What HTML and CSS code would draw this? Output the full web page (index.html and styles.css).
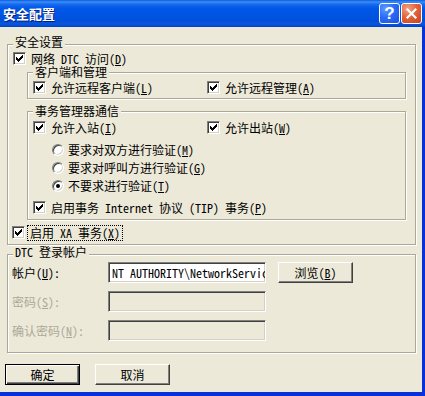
FILE: index.html
```html
<!DOCTYPE html>
<html lang="zh-CN">
<head>
<meta charset="utf-8">
<title>安全配置</title>
<link rel="stylesheet" href="styles.css">
</head>
<body>
<div class="window">
  <div class="titlebar">
    <span class="title">安全配置</span>
    <div class="caption-buttons">
      <span class="cap-btn help">?</span>
      <span class="cap-btn close"><svg width="21" height="21" viewBox="0 0 21 21"><path d="M6.5 6.5 L14.5 14.5 M14.5 6.5 L6.5 14.5" stroke="#fff" stroke-width="2.2" stroke-linecap="square"/></svg></span>
    </div>
  </div>
  <div class="client">
    <div class="group g-sec">
      <span class="group-title">安全设置</span>
      <label class="check"><span class="cb on"></span><span>网络 DTC 访问(<u>D</u>)</span></label>
      <div class="group sub g-client">
        <span class="group-title">客户端和管理</span>
        <div class="two-col">
          <label class="check"><span class="cb on"></span><span>允许远程客户端(<u>L</u>)</span></label>
          <label class="check"><span class="cb on"></span><span>允许远程管理(<u>A</u>)</span></label>
        </div>
      </div>
      <div class="group sub g-tm">
        <span class="group-title">事务管理器通信</span>
        <div class="two-col">
          <label class="check"><span class="cb on"></span><span>允许入站(<u>I</u>)</span></label>
          <label class="check"><span class="cb on"></span><span>允许出站(<u>W</u>)</span></label>
        </div>
        <div class="radios">
          <label class="radio"><span class="rb"></span><span>要求对双方进行验证(<u>M</u>)</span></label>
          <label class="radio"><span class="rb"></span><span>要求对呼叫方进行验证(<u>G</u>)</span></label>
          <label class="radio"><span class="rb on"></span><span>不要求进行验证(<u>T</u>)</span></label>
        </div>
        <label class="check tip"><span class="cb on"></span><span>启用事务 Internet 协议 (TIP) 事务(<u>P</u>)</span></label>
      </div>
      <label class="check xa"><span class="cb on"></span><span class="focus">启用 XA 事务(<u>X</u>)</span></label>
    </div>

    <div class="group g-dtc">
      <span class="group-title">DTC 登录帐户</span>
      <div class="form">
        <span class="flabel">帐户(<u>U</u>):</span>
        <div class="field"><span>NT AUTHORITY\NetworkService</span></div>
        <span class="btn browse">浏览(<u>B</u>)</span>
        <span class="flabel disabled">密码(<u>S</u>):</span>
        <div class="field disabled"></div>
        <span></span>
        <span class="flabel disabled">确认密码(<u>N</u>):</span>
        <div class="field disabled"></div>
        <span></span>
      </div>
    </div>

    <div class="actions">
      <span class="btn default">确定</span>
      <span class="btn">取消</span>
    </div>
  </div>
</div>
</body>
</html>
```
FILE: styles.css
```css
html, body {
  margin: 0;
  padding: 0;
}
body {
  width: 425px;
  height: 396px;
  overflow: hidden;
  background: #ece9d8;
  font-family: "Noto Sans Mono CJK SC", "Noto Sans CJK SC", sans-serif;
  font-size: 12px;
  line-height: 13px;
  color: #000;
}
u { text-decoration: underline; text-underline-offset: 1px; }

.window {
  width: 425px;
  height: 396px;
  display: flex;
  flex-direction: column;
}

/* title bar */
.titlebar {
  height: 27px;
  flex: none;
  display: flex;
  align-items: center;
  justify-content: space-between;
  background: linear-gradient(to bottom, #0a5ddc 0, #3d8ef6 2px, #1a6cf0 4px, #0058e6 8px, #0054e3 16px, #004ed9 21px, #0a55dd 24px, #0043c8 27px);
}
.title {
  margin-left: 3px;
  color: #fff;
  font-family: "Noto Sans CJK SC", sans-serif;
  font-weight: bold;
  font-size: 13px;
  line-height: 15px;
  text-shadow: 1px 1px 0 #0a1d7a;
}
.caption-buttons {
  display: flex;
  gap: 1px;
  margin-right: 3px;
}
.cap-btn {
  width: 21px;
  height: 21px;
  box-sizing: border-box;
  border: 1px solid #fff;
  border-radius: 3px;
  display: flex;
  align-items: center;
  justify-content: center;
}
.cap-btn.help {
  background: radial-gradient(circle at 30% 25%, #5f9cff 0, #2a6cf5 45%, #1a52e0 100%);
  color: #fff;
  font-family: "Liberation Sans", sans-serif;
  font-weight: bold;
  font-size: 17px;
  line-height: 19px;
}
.cap-btn.close {
  background: radial-gradient(circle at 30% 25%, #f2a283 0, #e2643a 45%, #c9401c 100%);
}
.cap-btn.close svg { display: block; margin: -1px; }

/* client area */
.client {
  flex: 1;
  width: 425px;
  border-right: 3px solid #0831d9;
  border-bottom: 4px solid #0831d9;
  padding: 17px 6px 0 7px;
  box-sizing: border-box;
  background: #ece9d8;
}

/* group boxes */
.group {
  position: relative;
  border: 1px solid #aca899;
  box-shadow: inset 1px 1px 0 #fff, 1px 1px 0 #fff;
}
.group-title {
  position: absolute;
  top: -9px;
  left: 5px;
  padding: 0 2px;
  background: #ece9d8;
  line-height: 12px;
  white-space: nowrap;
}
.sub > .group-title {
  top: -7px;
}
.g-sec {
  padding: 7px 0 5px 5px;
}
.sub {
  margin: 0 9px 0 14px;
  padding-left: 5px;
}
.g-client {
  margin-top: 7px;
  padding-top: 8px;
  padding-bottom: 4px;
}
.g-tm {
  margin-top: 12px;
  padding-top: 9px;
  padding-bottom: 5px;
}
.g-dtc {
  margin-top: 9px;
  padding: 7px 0 11px 4px;
}

/* checkboxes */
.check, .radio {
  display: flex;
  align-items: center;
  gap: 5px;
  height: 13px;
  line-height: 12px;
  white-space: nowrap;
}
.cb {
  flex: none;
  width: 13px;
  height: 13px;
  box-sizing: border-box;
  background: #fff;
  border: 1px solid;
  border-color: #808080 #fff #fff #808080;
  box-shadow: inset 1px 1px 0 #404040, inset -1px -1px 0 #d4d0c8;
  position: relative;
}
.cb.on::after {
  content: "";
  position: absolute;
  left: 2px;
  top: 2px;
  width: 7px;
  height: 7px;
  background:
    linear-gradient(#000, #000) 0 2px / 1px 3px no-repeat,
    linear-gradient(#000, #000) 1px 3px / 1px 3px no-repeat,
    linear-gradient(#000, #000) 2px 4px / 1px 3px no-repeat,
    linear-gradient(#000, #000) 3px 3px / 1px 3px no-repeat,
    linear-gradient(#000, #000) 4px 2px / 1px 3px no-repeat,
    linear-gradient(#000, #000) 5px 1px / 1px 3px no-repeat,
    linear-gradient(#000, #000) 6px 0 / 1px 3px no-repeat;
}
.two-col {
  display: grid;
  grid-template-columns: 174px 1fr;
}
.radios {
  margin-top: 7px;
  margin-left: 19px;
  display: flex;
  flex-direction: column;
}
.radio {
  height: 18px;
  gap: 4px;
}
.rb {
  flex: none;
  width: 12px;
  height: 12px;
  box-sizing: border-box;
  border-radius: 50%;
  background: #fff;
  border: 1px solid;
  border-color: #808080 #fff #fff #808080;
  box-shadow: inset 1px 1px 0 #404040, inset -1px -1px 0 #d4d0c8;
  position: relative;
}
.rb.on::after {
  content: "";
  position: absolute;
  left: 3px;
  top: 3px;
  width: 4px;
  height: 4px;
  border-radius: 50%;
  background: #000;
}
.tip {
  margin-top: 6px;
}
.xa {
  margin-top: 6px;
  margin-left: -1px;
  gap: 4px;
}
.focus {
  outline: 1px dotted #000;
  outline-offset: 1px;
  padding: 0 1px;
}

/* form */
.form {
  display: grid;
  grid-template-columns: 96px 158px 87px;
  grid-template-rows: 21px 21px 21px;
  row-gap: 8px;
  align-items: center;
}
.flabel {
  white-space: nowrap;
}
.flabel.disabled {
  color: #aca899;
}
.field {
  height: 21px;
  box-sizing: border-box;
  background: #fff;
  border: 1px solid;
  border-color: #808080 #fff #fff #808080;
  box-shadow: inset 1px 1px 0 #404040, inset -1px -1px 0 #d4d0c8;
  padding: 3px 0 0 3px;
  overflow: hidden;
  white-space: nowrap;
}
.field.disabled {
  background: #ece9d8;
}

/* buttons */
.btn {
  width: 75px;
  height: 21px;
  box-sizing: border-box;
  display: flex;
  align-items: center;
  justify-content: center;
  background: #ece9d8;
  border: 1px solid;
  border-color: #fff #404040 #404040 #fff;
  box-shadow: inset -1px -1px 0 #808080, inset 1px 1px 0 #ece9d8;
  white-space: nowrap;
}
.browse {
  margin-left: 12px;
}
.actions {
  display: flex;
  gap: 15px;
  margin-top: 11px;
  margin-left: -2px;
}
.btn.default {
  border: 1px solid #000;
  box-shadow: inset 1px 1px 0 #fff, inset -1px -1px 0 #404040, inset -2px -2px 0 #808080;
}
```
